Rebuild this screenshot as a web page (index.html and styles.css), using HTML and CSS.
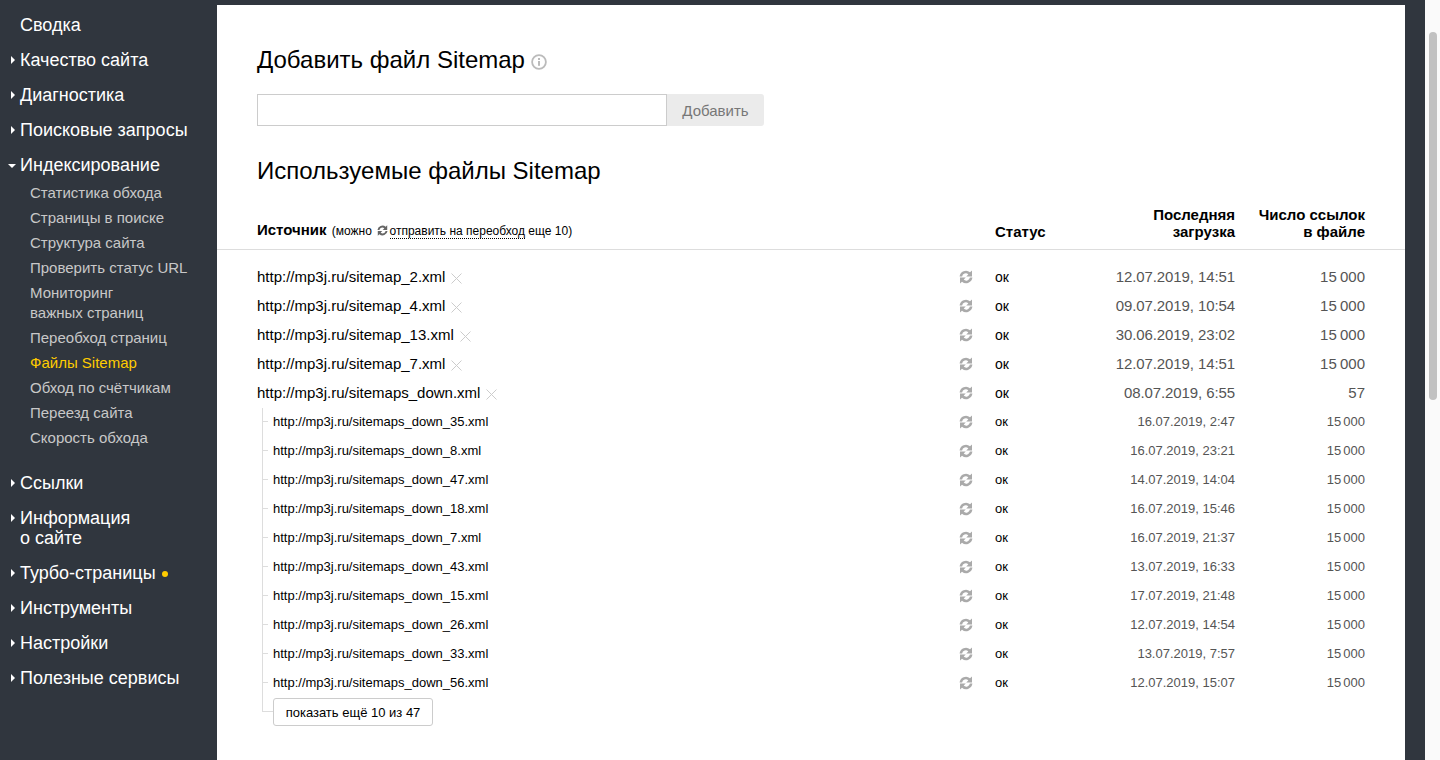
FILE: index.html
```html
<!DOCTYPE html>
<html lang="ru">
<head>
<meta charset="utf-8">
<title>Файлы Sitemap</title>
<link rel="stylesheet" href="styles.css">
</head>
<body>
<svg class="defs" width="0" height="0" aria-hidden="true">
  <symbol id="sync" viewBox="0 0 14 14">
    <path d="M.6 6.4A6.4 6.4 0 0 1 11 2.2L13 .4V6.4H7.2L9.3 4.4A3.7 3.7 0 0 0 3.1 6.4Z"/>
    <path d="M13.4 7.6A6.4 6.4 0 0 1 3 11.8L1 13.6V7.6H6.8L4.7 9.6A3.7 3.7 0 0 0 10.9 7.6Z"/>
  </symbol>
  <symbol id="cross" viewBox="0 0 11 11">
    <path d="M.5.5l10 10M10.5.5l-10 10" fill="none" stroke="currentColor" stroke-width="1"/>
  </symbol>
</svg>
<div class="page">
  <nav class="side">
    <a class="nav-top">Сводка</a>
    <a class="nav-top closed">Качество сайта</a>
    <a class="nav-top closed">Диагностика</a>
    <a class="nav-top closed">Поисковые запросы</a>
    <a class="nav-top open">Индексирование</a>
    <div class="sub">
      <a>Статистика обхода</a>
      <a>Страницы в поиске</a>
      <a>Структура сайта</a>
      <a>Проверить статус URL</a>
      <a>Мониторинг<br>важных страниц</a>
      <a>Переобход страниц</a>
      <a class="active">Файлы Sitemap</a>
      <a>Обход по счётчикам</a>
      <a>Переезд сайта</a>
      <a>Скорость обхода</a>
    </div>
    <a class="nav-top closed">Ссылки</a>
    <a class="nav-top closed">Информация<br>о сайте</a>
    <a class="nav-top closed">Турбо-страницы<i class="dot"></i></a>
    <a class="nav-top closed">Инструменты</a>
    <a class="nav-top closed">Настройки</a>
    <a class="nav-top closed">Полезные сервисы</a>
  </nav>
  <main class="main">
    <section class="add">
      <h1 class="title">Добавить файл Sitemap<svg class="info" viewBox="0 0 16 16" width="16" height="16"><circle cx="8" cy="8" r="6.9" fill="none" stroke="#bbb" stroke-width="1.8"/><rect x="7" y="7" width="2" height="4.8" fill="#bbb"/><rect x="7" y="4" width="2" height="2" fill="#bbb"/></svg></h1>
      <form class="add-form">
        <input class="add-input" type="text" aria-label="Sitemap">
        <button class="add-btn" type="button">Добавить</button>
      </form>
    </section>
    <h2 class="title used">Используемые файлы Sitemap</h2>
    <div class="row head">
      <div><b>Источник</b> <span class="note">(можно <svg class="ico-note"><use href="#sync"/></svg> <u>отправить на переобход</u> еще 10)</span></div>
      <div></div>
      <div><b>Статус</b></div>
      <div class="r"><b>Последняя<br>загрузка</b></div>
      <div class="r"><b>Число ссылок<br>в файле</b></div>
    </div>
    <div class="rows">
      <div class="row"><div>http://mp3j.ru/sitemap_2.xml<svg class="x"><use href="#cross"/></svg></div><div><svg class="ico"><use href="#sync"/></svg></div><div class="st">ок</div><div class="r g">12.07.2019, 14:51</div><div class="r g n">15 000</div></div>
      <div class="row"><div>http://mp3j.ru/sitemap_4.xml<svg class="x"><use href="#cross"/></svg></div><div><svg class="ico"><use href="#sync"/></svg></div><div class="st">ок</div><div class="r g">09.07.2019, 10:54</div><div class="r g n">15 000</div></div>
      <div class="row"><div>http://mp3j.ru/sitemap_13.xml<svg class="x"><use href="#cross"/></svg></div><div><svg class="ico"><use href="#sync"/></svg></div><div class="st">ок</div><div class="r g">30.06.2019, 23:02</div><div class="r g n">15 000</div></div>
      <div class="row"><div>http://mp3j.ru/sitemap_7.xml<svg class="x"><use href="#cross"/></svg></div><div><svg class="ico"><use href="#sync"/></svg></div><div class="st">ок</div><div class="r g">12.07.2019, 14:51</div><div class="r g n">15 000</div></div>
      <div class="row"><div>http://mp3j.ru/sitemaps_down.xml<svg class="x"><use href="#cross"/></svg></div><div><svg class="ico"><use href="#sync"/></svg></div><div class="st">ок</div><div class="r g">08.07.2019, 6:55</div><div class="r g n">57</div></div>
      <div class="tree">
        <div class="row small"><div>http://mp3j.ru/sitemaps_down_35.xml</div><div><svg class="ico"><use href="#sync"/></svg></div><div class="st">ок</div><div class="r g">16.07.2019, 2:47</div><div class="r g n">15 000</div></div>
        <div class="row small"><div>http://mp3j.ru/sitemaps_down_8.xml</div><div><svg class="ico"><use href="#sync"/></svg></div><div class="st">ок</div><div class="r g">16.07.2019, 23:21</div><div class="r g n">15 000</div></div>
        <div class="row small"><div>http://mp3j.ru/sitemaps_down_47.xml</div><div><svg class="ico"><use href="#sync"/></svg></div><div class="st">ок</div><div class="r g">14.07.2019, 14:04</div><div class="r g n">15 000</div></div>
        <div class="row small"><div>http://mp3j.ru/sitemaps_down_18.xml</div><div><svg class="ico"><use href="#sync"/></svg></div><div class="st">ок</div><div class="r g">16.07.2019, 15:46</div><div class="r g n">15 000</div></div>
        <div class="row small"><div>http://mp3j.ru/sitemaps_down_7.xml</div><div><svg class="ico"><use href="#sync"/></svg></div><div class="st">ок</div><div class="r g">16.07.2019, 21:37</div><div class="r g n">15 000</div></div>
        <div class="row small"><div>http://mp3j.ru/sitemaps_down_43.xml</div><div><svg class="ico"><use href="#sync"/></svg></div><div class="st">ок</div><div class="r g">13.07.2019, 16:33</div><div class="r g n">15 000</div></div>
        <div class="row small"><div>http://mp3j.ru/sitemaps_down_15.xml</div><div><svg class="ico"><use href="#sync"/></svg></div><div class="st">ок</div><div class="r g">17.07.2019, 21:48</div><div class="r g n">15 000</div></div>
        <div class="row small"><div>http://mp3j.ru/sitemaps_down_26.xml</div><div><svg class="ico"><use href="#sync"/></svg></div><div class="st">ок</div><div class="r g">12.07.2019, 14:54</div><div class="r g n">15 000</div></div>
        <div class="row small"><div>http://mp3j.ru/sitemaps_down_33.xml</div><div><svg class="ico"><use href="#sync"/></svg></div><div class="st">ок</div><div class="r g">13.07.2019, 7:57</div><div class="r g n">15 000</div></div>
        <div class="row small"><div>http://mp3j.ru/sitemaps_down_56.xml</div><div><svg class="ico"><use href="#sync"/></svg></div><div class="st">ок</div><div class="r g">12.07.2019, 15:07</div><div class="r g n">15 000</div></div>
        <div class="more-wrap"><button class="more" type="button">показать ещё 10 из 47</button></div>
      </div>
    </div>
  </main>
  <div class="gutter"></div>
  <div class="scrollbar"><div class="thumb"></div></div>
</div>
</body>
</html>
```
FILE: styles.css
```css
* { box-sizing: border-box; }
html, body { margin: 0; height: 760px; overflow: hidden; }
body { font-family: "Liberation Sans", Arial, sans-serif; color: #000; background: #30363e; }
.defs { position: absolute; }
.page { display: flex; height: 760px; }

.side { width: 217px; flex: none; padding-top: 7px; display: flex; flex-direction: column; align-items: flex-start; }
.nav-top { display: block; position: relative; margin-left: 20px; font-size: 18px; line-height: 20px; padding: 8px 0 7px; color: #fff; }
.closed::before { content: ""; position: absolute; left: -9px; top: 14px; border-left: 4px solid #fff; border-top: 4px solid transparent; border-bottom: 4px solid transparent; }
.open::before { content: ""; position: absolute; left: -12px; top: 17px; border-top: 4px solid #fff; border-left: 4px solid transparent; border-right: 4px solid transparent; }
.dot { display: inline-block; width: 6px; height: 6px; border-radius: 50%; background: #ffcc00; margin-left: 6px; vertical-align: 2px; }
.sub { display: flex; flex-direction: column; align-items: flex-start; margin-top: -2px; padding: 0 0 15px 30px; }
.sub a { display: block; font-size: 15px; line-height: 20px; padding: 2.5px 0; color: #c8c8c8; }
.sub a.active { color: #ffcc00; }

.main { width: 1188px; flex: none; margin-top: 5px; height: 755px; background: #fff; padding-top: 40px; }
.add { padding: 0 40px; }
.title { margin: 0; font-weight: 400; font-size: 24px; line-height: 30px; color: #000; }
.info { margin-left: 6px; vertical-align: -2px; }
.add-form { display: flex; margin-top: 19px; }
.add-input { width: 410px; height: 32px; border: 1px solid #ccc; background: #fff; padding: 0; margin: 0; }
.add-btn { width: 97px; height: 32px; border: 0; border-radius: 0 3px 3px 0; background: #ebebeb; color: #777; font: 15px "Liberation Sans", Arial, sans-serif; padding: 0; margin: 0; }
.used { padding: 0 40px; margin-top: 30px; }

.row { display: grid; grid-template-columns: 1fr 37px 60px 180px 130px; padding: 0 40px; font-size: 15px; line-height: 20px; height: 29px; align-items: center; }
.head { height: auto; align-items: end; margin-top: 20px; padding-bottom: 9px; border-bottom: 1px solid #ddd; font-size: 15px; line-height: 17px; }
.note { font-size: 12px; font-weight: 400; margin-left: 1px; }
.note u { text-decoration: none; border-bottom: 1px dotted #000; margin-left: -2px; }
.ico-note { width: 11px; height: 11px; fill: #666; vertical-align: -1px; margin-left: 2px; }
.rows { padding-top: 12px; }
.r { text-align: right; }
.g { color: #555; letter-spacing: -.1px; }
.n { word-spacing: -1px; letter-spacing: 0; }
.st { font-size: 14px; }
.x { width: 11px; height: 11px; margin-left: 6px; color: #ccc; vertical-align: -2px; }
.ico { width: 14px; height: 14px; fill: #aaa; display: block; margin-left: 1px; }

.tree { position: relative; }
.tree::before { content: ""; position: absolute; left: 45px; top: 1px; height: 304px; border-left: 1px solid #ddd; }
.small { font-size: 13px; padding-left: 56px; position: relative; }
.small::before { content: ""; position: absolute; left: 45px; top: 14px; width: 6px; border-top: 1px solid #ddd; }
.small .st { font-size: 13px; }
.small .g { letter-spacing: 0; }
.small .n { word-spacing: -1.5px; }
.more-wrap { position: relative; padding: 1px 0 0 56px; }
.more-wrap::before { content: ""; position: absolute; left: 45px; top: 14px; width: 11px; border-top: 1px solid #ddd; }
.more { display: block; width: 160px; height: 28px; background: #fff; border: 1px solid #ccc; border-radius: 3px; font: 13px "Liberation Sans", Arial, sans-serif; color: #000; padding: 0; margin: 0; }

.gutter { width: 20px; flex: none; }
.scrollbar { width: 15px; flex: none; background: #fafafa; padding: 32px 3px 0 4px; }
.thumb { height: 368px; background: #c1c1c1; border-radius: 4px; }
```
